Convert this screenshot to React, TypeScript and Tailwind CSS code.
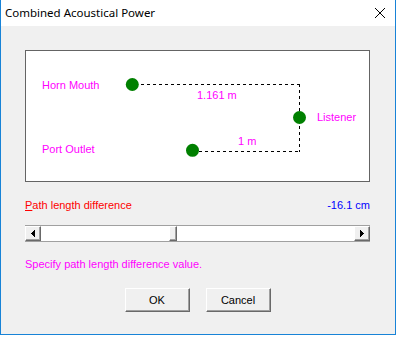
import React from "react";

const ui = { fontFamily: '"Liberation Sans", Arial, sans-serif' };

function Bevel({ className, children }: { className: string; children?: React.ReactNode }) {
  // classic raised 3D face
  return (
    <div
      className={
        "flex items-center justify-center bg-[#f0f0f0] border-t border-l border-t-white border-l-white border-b border-r border-b-[#696969] border-r-[#696969] shadow-[inset_-1px_-1px_0_#a0a0a0] " +
        className
      }
    >
      {children}
    </div>
  );
}

function Diagram() {
  return (
    <div className="relative w-[345px] h-[132px] bg-white border border-[#646464] text-[11px] leading-[13px] text-[#ff00ff]">
      <svg className="absolute left-0 top-0" width="343" height="130" shapeRendering="crispEdges">
        <g stroke="#000" strokeWidth="1" strokeDasharray="3 3" fill="none">
          <line x1="115" y1="33.5" x2="274" y2="33.5" />
          <line x1="273.5" y1="33" x2="273.5" y2="101" />
          <line x1="173" y1="100.5" x2="274" y2="100.5" />
        </g>
        <g fill="#008000" shapeRendering="auto">
          <circle cx="106.3" cy="33.5" r="6.5" />
          <circle cx="273.5" cy="66.5" r="6.5" />
          <circle cx="166.5" cy="99.3" r="6.5" />
        </g>
      </svg>
      <span className="absolute left-[16px] top-[28px]">Horn Mouth</span>
      <span className="absolute left-[16px] top-[92px]">Port Outlet</span>
      <span className="absolute left-[291px] top-[60px]">Listener</span>
      <span className="absolute left-[171px] top-[38px]">1.161 m</span>
      <span className="absolute left-[212px] top-[84px]">1 m</span>
    </div>
  );
}

function ScrollBar() {
  return (
    <div className="flex w-[345px] h-[17px] bg-white border-t border-b border-[#a0a0a0]">
      <Bevel className="w-[16px] h-full">
        <svg width="4" height="7" viewBox="0 0 4 7" shapeRendering="crispEdges">
          <path d="M0 3.5 L4 0 L4 7 Z" fill="#000" />
        </svg>
      </Bevel>
      <div className="w-[128px]" />
      <Bevel className="w-[8px] h-full" />
      <div className="flex-1" />
      <Bevel className="w-[16px] h-full">
        <svg width="4" height="7" viewBox="0 0 4 7" shapeRendering="crispEdges">
          <path d="M4 3.5 L0 0 L0 7 Z" fill="#000" />
        </svg>
      </Bevel>
    </div>
  );
}

export default function App() {
  return (
    <div className="w-[396px] h-[360px] bg-white">
      <div className="flex flex-col h-[335px] border-l border-r border-b border-[#1883d7]">
        <div className="flex items-center justify-between h-[26px] bg-white pl-[4px] pr-[10px]">
          <span className="text-[11.5px] text-black" style={{ fontFamily: '"Noto Sans", "Open Sans", sans-serif' }}>
            Combined Acoustical Power
          </span>
          <svg width="10" height="10" viewBox="0 0 10 10">
            <path d="M0 0 L10 10 M10 0 L0 10" stroke="#000" strokeWidth="1" />
          </svg>
        </div>
        <div className="flex-1 bg-[#f0f0f0] pl-[24px] pt-[24px]" style={ui}>
          <Diagram />
          <div className="flex justify-between w-[345px] mt-[17px] text-[11px] leading-[13px]">
            <span className="text-[#ff0000]">
              <span className="underline">P</span>ath length difference
            </span>
            <span className="text-[#0000ff]">-16.1 cm</span>
          </div>
          <div className="mt-[13px]">
            <ScrollBar />
          </div>
          <div className="mt-[16px] text-[11px] leading-[13px] text-[#ff00ff]">
            Specify path length difference value.
          </div>
          <div className="flex justify-center gap-[16px] mt-[17px] w-[345px] text-[11px] text-black">
            <Bevel className="w-[65px] h-[24px]">OK</Bevel>
            <Bevel className="w-[65px] h-[24px]">Cancel</Bevel>
          </div>
        </div>
      </div>
    </div>
  );
}
